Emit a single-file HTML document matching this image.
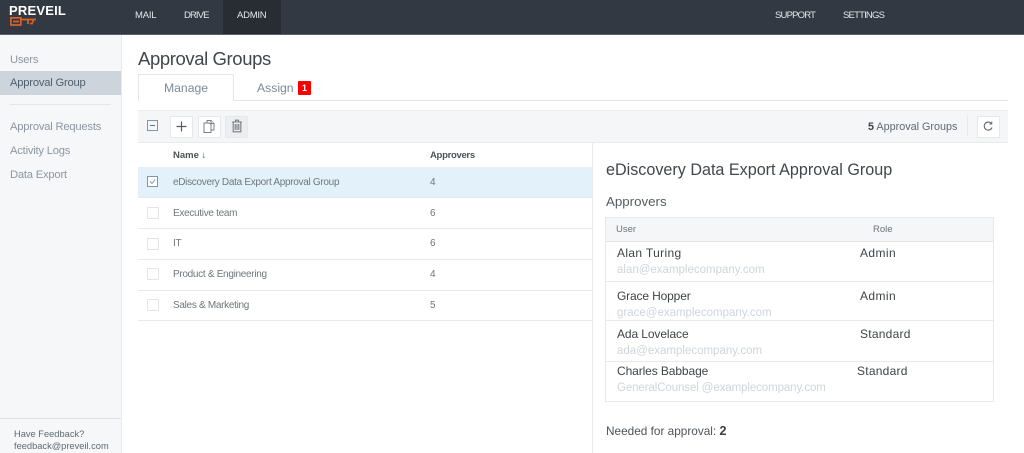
<!DOCTYPE html>
<html><head><meta charset="utf-8">
<style>
html,body{margin:0;padding:0;background:#fff}
body{width:1024px;height:453px;overflow:hidden;position:relative;font-family:"Liberation Sans",sans-serif}
#w{position:absolute;left:0;top:0;width:1024px;height:453px;filter:blur(.35px)}
.a,.t{position:absolute}
.t{white-space:nowrap;line-height:14px}
.nav{color:#e4e7ea;font-size:9.5px;top:9px}
.side{color:#8d97a3;font-size:11.2px;letter-spacing:-.2px;left:10px}
.row{left:173px;color:#70767c;font-size:10px;letter-spacing:-.3px}
.num{left:430px;color:#70767c;font-size:10px}
.cb{position:absolute;left:147px;width:10px;height:10px;border:1px solid #e2e5e8;background:#fff;border-radius:1px}
.ln{position:absolute;height:1px;background:#e8eaed}
.nm{left:617px;color:#3f4448;font-size:12px}
.em{left:617px;color:#cfd5dc;font-size:11.5px}
.rl{color:#3f4448;font-size:12px}
.btn{position:absolute;top:116px;width:21px;height:20px;background:#fff;border:1px solid #e6e8eb;border-radius:1px}
</style></head><body><div id="w">
<div class="a" style="left:0;top:0;width:1024px;height:34px;background:#323943"></div>
<div class="a" style="left:0;top:34px;width:1024px;height:1px;background:#5b6068"></div>
<div class="a" style="left:223px;top:0;width:58px;height:34px;background:#282d34"></div>
<div class="t" style="left:9px;top:4px;color:#fff;font-size:13px;font-weight:bold;letter-spacing:.2px">PREVEIL</div>
<svg class="a" style="left:10px;top:17px" width="26" height="9" viewBox="0 0 26 9" fill="none" stroke="#d9622b" stroke-width="1.7"><rect x=".8" y=".8" width="10" height="7.2"/><path d="M3 4.5h6M11 2.5h15M18 2.5v4.5M20 6.5h3M23 2.5v3"/></svg>
<div class="t nav" style="left:135px;letter-spacing:-.2px">MAIL</div>
<div class="t nav" style="left:184px;letter-spacing:-.9px">DRIVE</div>
<div class="t nav" style="left:237px;letter-spacing:-.25px">ADMIN</div>
<div class="t nav" style="left:775px;letter-spacing:-.8px">SUPPORT</div>
<div class="t nav" style="left:843px;letter-spacing:-.8px">SETTINGS</div>

<div class="a" style="left:0;top:35px;width:121px;height:418px;background:#f6f7f9;border-right:1px solid #e8eaed"></div>
<div class="a" style="left:0;top:71px;width:121px;height:24px;background:#cdd4dc"></div>
<div class="t side" style="top:53px">Users</div>
<div class="t side" style="top:76px;color:#4e5f70">Approval Group</div>
<div class="a" style="left:10px;top:104px;width:101px;height:1px;background:#e4e7ea"></div>
<div class="t side" style="top:120px">Approval Requests</div>
<div class="t side" style="top:144px">Activity Logs</div>
<div class="t side" style="top:168px">Data Export</div>
<div class="a" style="left:0;top:418px;width:121px;height:1px;background:#dfe2e6"></div>
<div class="t" style="left:14px;top:427px;font-size:9.3px;color:#5e6a76">Have Feedback?</div>
<div class="t" style="left:14px;top:439px;font-size:9.3px;color:#5e6a76">feedback@preveil.com</div>

<div class="t" style="left:138px;top:48px;font-size:18.5px;letter-spacing:-.4px;line-height:22px;color:#41474d">Approval Groups</div>
<div class="a" style="left:233px;top:100px;width:775px;height:1px;background:#e2e6ea"></div>
<div class="a" style="left:138px;top:74px;width:96px;height:27px;background:#fff;border:1px solid #e2e6ea;border-bottom:0;box-sizing:border-box"></div>
<div class="t" style="left:164px;top:81px;font-size:12.2px;color:#7b8b9b">Manage</div>
<div class="t" style="left:257px;top:81px;font-size:12.2px;color:#7b8b9b">Assign</div>
<div class="a" style="left:298px;top:81px;width:13px;height:14px;background:#f80000;border-radius:1px;color:#fff;font-size:9px;font-weight:bold;line-height:14px;text-align:center">1</div>

<div class="a" style="left:138px;top:110px;width:870px;height:33px;background:#f5f6f8;border-top:1px solid #eceef0;border-bottom:1px solid #e8eaed;box-sizing:border-box"></div>
<svg class="a" style="left:147px;top:120px" width="11" height="11" viewBox="0 0 11 11" fill="none" stroke="#7f97ae"><rect x=".5" y=".5" width="10" height="10"/><path d="M3 5.5h5" stroke="#5f7186"/></svg>
<div class="btn" style="left:170px"></div>
<svg class="a" style="left:175px;top:120px" width="13" height="13" viewBox="0 0 13 13" stroke="#555c63" stroke-width="1.2"><path d="M6.5 1.5v10M1.5 6.5h10"/></svg>
<div class="btn" style="left:198px"></div>
<svg class="a" style="left:203px;top:120px" width="12" height="13" viewBox="0 0 12 13" fill="#fff" stroke="#7a8087" stroke-width="1"><path d="M4 .5h4l3 3v6.5H4z"/><path d="M8 .5v3h3" /><path d="M1 3h5.5l1.5 1.5v8H1z"/></svg>
<div class="btn" style="left:225px;background:#eceef0"></div>
<svg class="a" style="left:231px;top:119px" width="12" height="14" viewBox="0 0 12 14" fill="none" stroke="#777d84" stroke-width="1.1"><path d="M1 3h10M4.5 3V1.2h3V3"/><path d="M2.2 3v9.8h7.6V3"/><path d="M4.2 5v6M6 5v6M7.8 5v6"/></svg>
<div class="t" style="left:868px;top:120px;font-size:10.8px;color:#616a73"><b style="color:#3f4448">5</b> Approval Groups</div>
<div class="a" style="left:967px;top:116px;width:1px;height:20px;background:#e8eaed"></div>
<div class="a" style="left:977px;top:116px;width:21px;height:20px;background:#fff;border:1px solid #e6e8eb"></div>
<svg class="a" style="left:982px;top:120px" width="12" height="12" viewBox="0 0 12 12" fill="none" stroke="#5f666d" stroke-width="1.1"><path d="M9.3 3.5A4 4 0 1 0 10 7.5"/><path d="M9.8 1.5v2.6H7.2" stroke-width=".9"/></svg>

<div class="t" style="left:173px;top:149px;font-size:9.5px;font-weight:bold;color:#4e5358">Name <span style="font-weight:normal">↓</span></div>
<div class="t" style="left:430px;top:149px;font-size:9.5px;letter-spacing:-.3px;font-weight:bold;color:#4e5358">Approvers</div>
<div class="a" style="left:138px;top:167px;width:454px;height:31px;background:#e3f2fa"></div>
<div class="ln" style="left:138px;top:197px;width:454px;background:#e3ebf0"></div>
<div class="ln" style="left:138px;top:228px;width:454px"></div>
<div class="ln" style="left:138px;top:259px;width:454px"></div>
<div class="ln" style="left:138px;top:290px;width:454px"></div>
<div class="ln" style="left:138px;top:320px;width:454px"></div>
<div class="a" style="left:592px;top:143px;width:1px;height:310px;background:#e8eaed"></div>

<svg class="a" style="left:147px;top:176px" width="11" height="11" viewBox="0 0 11 11" fill="#fff" stroke="#7f97ae"><rect x=".5" y=".5" width="10" height="10"/><path d="M3 5.5l2 2 3.2-4" fill="none"/></svg>
<div class="t row" style="top:176px">eDiscovery Data Export Approval Group</div><div class="t num" style="top:176px">4</div>
<div class="cb" style="top:207px"></div>
<div class="t row" style="top:207px">Executive team</div><div class="t num" style="top:207px">6</div>
<div class="cb" style="top:238px"></div>
<div class="t row" style="top:237px">IT</div><div class="t num" style="top:237px">6</div>
<div class="cb" style="top:268px"></div>
<div class="t row" style="top:268px">Product &amp; Engineering</div><div class="t num" style="top:268px">4</div>
<div class="cb" style="top:299px"></div>
<div class="t row" style="top:299px">Sales &amp; Marketing</div><div class="t num" style="top:299px">5</div>

<div class="t" style="left:606px;top:160px;font-size:16.15px;line-height:20px;color:#41474d">eDiscovery Data Export Approval Group</div>
<div class="t" style="left:606px;top:195px;font-size:13.3px;color:#555c63">Approvers</div>
<div class="a" style="left:605px;top:217px;width:389px;height:185px;border:1px solid #e6e8eb;box-sizing:border-box"></div>
<div class="a" style="left:606px;top:218px;width:387px;height:24px;background:#f5f6f8;border-bottom:1px solid #e2e4e7;box-sizing:border-box"></div>
<div class="t" style="left:616px;top:223px;font-size:9.5px;color:#6c737a">User</div>
<div class="t" style="left:873px;top:223px;font-size:9.5px;color:#6c737a">Role</div>
<div class="ln" style="left:606px;top:281px;width:387px"></div>
<div class="ln" style="left:606px;top:320px;width:387px"></div>
<div class="ln" style="left:606px;top:361px;width:387px"></div>

<div class="t nm" style="top:246px;letter-spacing:.35px">Alan Turing</div><div class="t rl" style="left:860px;top:246px;letter-spacing:.4px">Admin</div>
<div class="t em" style="top:263px">alan@examplecompany.com</div>
<div class="t nm" style="top:289px;letter-spacing:-.15px">Grace Hopper</div><div class="t rl" style="left:860px;top:289px;letter-spacing:.4px">Admin</div>
<div class="t em" style="top:306px">grace@examplecompany.com</div>
<div class="t nm" style="top:327px;letter-spacing:-.1px">Ada Lovelace</div><div class="t rl" style="left:860px;top:327px;letter-spacing:.25px">Standard</div>
<div class="t em" style="top:344px">ada@examplecompany.com</div>
<div class="t nm" style="top:364px;letter-spacing:-.1px">Charles Babbage</div><div class="t rl" style="left:857px;top:364px;letter-spacing:.25px">Standard</div>
<div class="t em" style="top:381px;letter-spacing:-.1px">GeneralCounsel @examplecompany.com</div>
<div class="t" style="left:606px;top:424px;font-size:11.8px;color:#4e5358">Needed for approval: <b style="color:#3a3f44;font-size:12.5px">2</b></div>
</div></body></html>
